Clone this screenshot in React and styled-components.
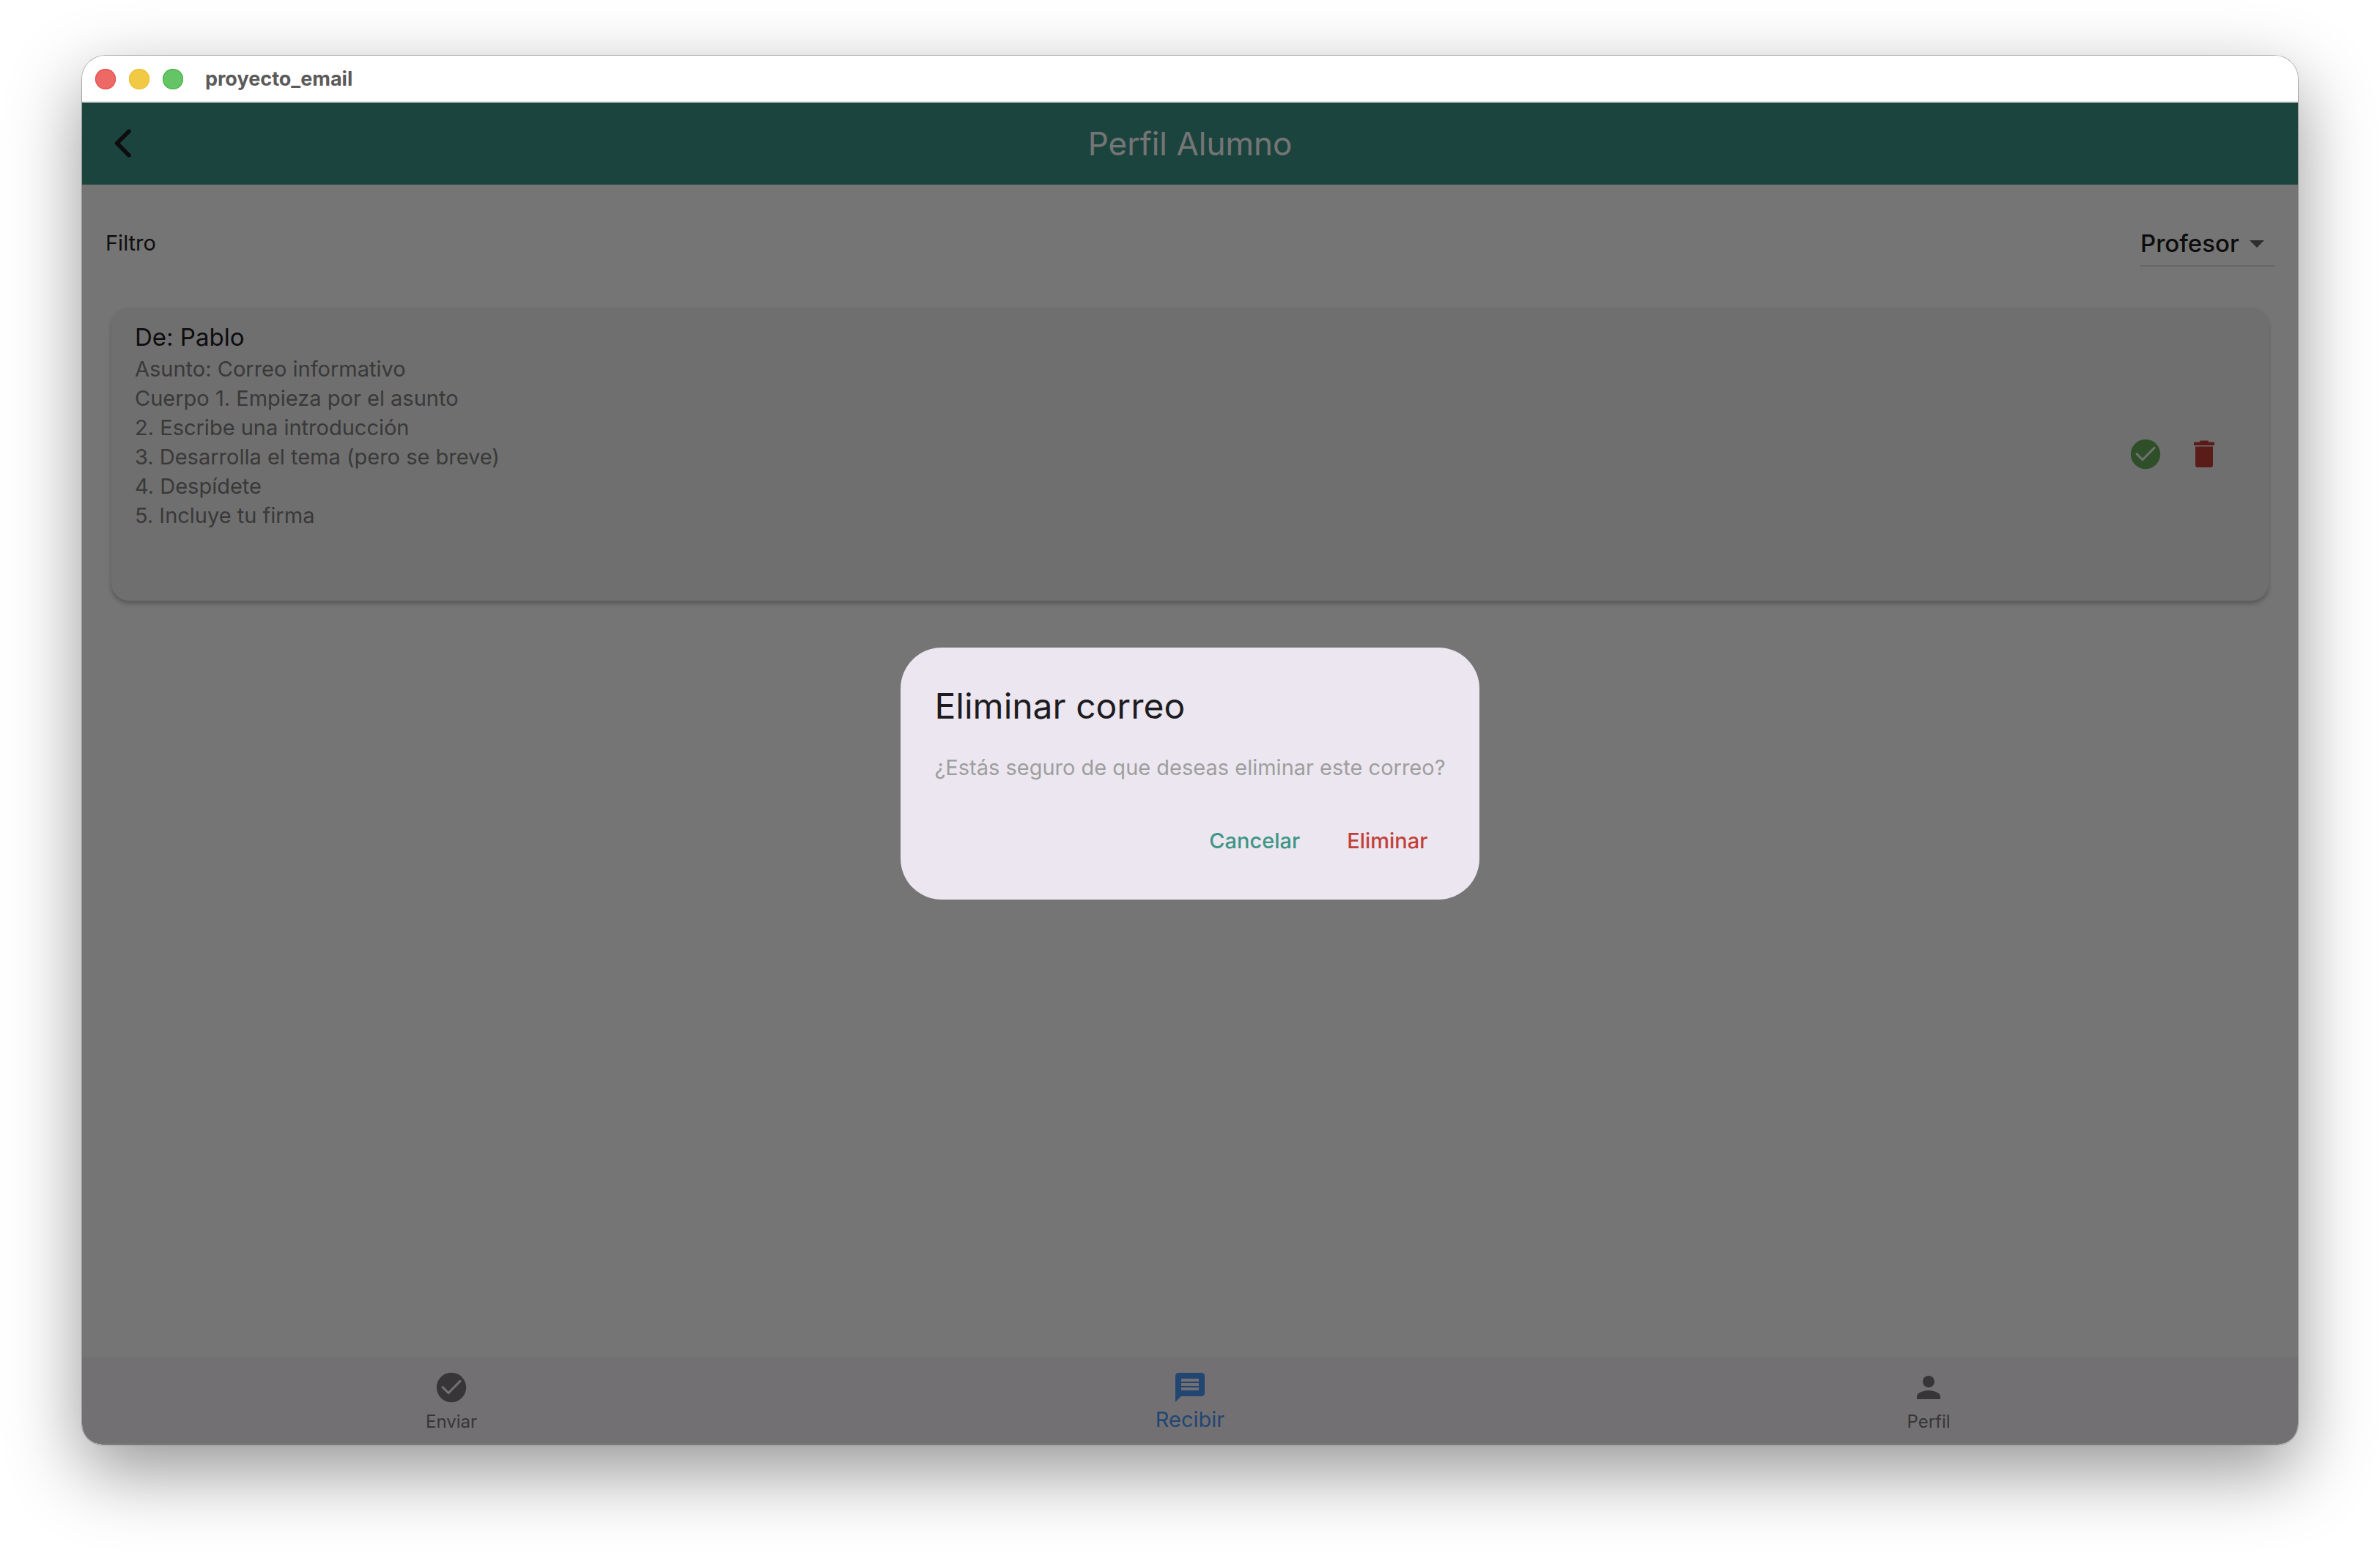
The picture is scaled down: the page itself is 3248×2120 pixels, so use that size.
import React from "react";
import styled, { createGlobalStyle } from "styled-components";

const GlobalStyle = createGlobalStyle`
  *, *::before, *::after { box-sizing: border-box; }
  body {
    margin: 0;
    background: #ffffff;
    font-family: Inter, "Liberation Sans", sans-serif;
    color: #1d1b20;
  }
  h1, h2, p { margin: 0; font-weight: 400; }
  button, select { font-family: inherit; border: 0; background: none; padding: 0; margin: 0; cursor: pointer; }
`;

const Desktop = styled.div`
  display: flex;
  min-height: 100vh;
  padding: 76px 112px 148px;
`;

const AppWindow = styled.div`
  display: flex;
  flex: 1;
  flex-direction: column;
  overflow: hidden;
  border-radius: 32px 32px 28px 28px;
  box-shadow: 0 0 0 1px rgba(0, 0, 0, 0.26), 0 36px 100px rgba(0, 0, 0, 0.42);
`;

const TitleBar = styled.div`
  display: flex;
  align-items: center;
  gap: 18px;
  height: 64px;
  padding: 2px 18px 0;
  background: #ffffff;
  border-bottom: 2px solid #e5e5e5;
`;

const TrafficLight = styled.button`
  width: 28px;
  height: 28px;
  border-radius: 50%;
  background: ${(p) => p.$fill};
  box-shadow: inset 0 0 0 1px ${(p) => p.$edge};
`;

const WindowTitle = styled.span`
  padding-left: 12px;
  font-size: 27px;
  line-height: 32px;
  font-weight: 700;
  color: #5a5a5a;
`;

const Screen = styled.div`
  position: relative;
  display: flex;
  flex: 1;
  flex-direction: column;
  background: #ffffff;
`;

const AppBar = styled.header`
  display: grid;
  grid-template-columns: 112px 1fr 112px;
  align-items: center;
  height: 112px;
  background: #3b9487;
`;

const IconButton = styled.button`
  display: flex;
  align-items: center;
  justify-content: center;
  justify-self: center;
  width: 80px;
  height: 80px;
  color: ${(p) => p.$color};
`;

const AppBarTitle = styled.h1`
  text-align: center;
  font-size: 44px;
  line-height: 56px;
  color: #ffffff;
`;

const Content = styled.main`
  display: flex;
  flex: 1;
  flex-direction: column;
  gap: 56px;
  padding: 56px 32px;
`;

const FilterRow = styled.div`
  display: flex;
  justify-content: space-between;
  align-items: flex-start;
`;

const FilterLabel = styled.label`
  font-size: 29px;
  line-height: 48px;
  color: #212121;
`;

const SelectField = styled.div`
  position: relative;
  display: flex;
  padding-bottom: 6px;
  border-bottom: 2px solid #dedede;
`;

const Select = styled.select`
  appearance: none;
  height: 48px;
  padding-right: 48px;
  font-size: 33px;
  line-height: 48px;
  font-weight: 500;
  color: #1d1b20;
  outline: none;
`;

const SelectArrow = styled.svg`
  position: absolute;
  top: 0;
  right: 0;
  pointer-events: none;
  color: #646464;
`;

const MailList = styled.ul`
  display: flex;
  flex-direction: column;
  gap: 16px;
  list-style: none;
  margin: 0;
  padding: 0 8px;
`;

const MailCard = styled.li`
  display: flex;
  align-items: center;
  justify-content: space-between;
  padding: 16px 48px 16px 32px;
  border-radius: 24px;
  background: #f2f2f2;
  box-shadow: 0 4px 6px rgba(0, 0, 0, 0.26);
`;

const MailSender = styled.h2`
  font-size: 33px;
  line-height: 48px;
  color: #1d1b20;
`;

const MailText = styled.p`
  font-size: 29px;
  line-height: 40px;
  color: #7c7c7c;
`;

const MailBody = styled.div`
  padding-bottom: 80px;
`;

const MailActions = styled.div`
  display: flex;
`;

const BottomNav = styled.nav`
  display: grid;
  grid-template-columns: repeat(3, 1fr);
  height: 120px;
  background: #faf5fa;
  border-bottom: 2px solid #ffffff;
`;

const NavItem = styled.button`
  display: flex;
  flex-direction: column;
  align-items: center;
  gap: ${(p) => (p.$active ? "4px" : "7px")};
  padding-top: 18px;
  font-size: ${(p) => (p.$active ? "29px" : "24px")};
  line-height: 32px;
  color: ${(p) => (p.$active ? "#4a98f8" : "#78737a")};
`;

const Scrim = styled.div`
  position: absolute;
  inset: 0;
  display: flex;
  align-items: center;
  justify-content: center;
  background: rgba(0, 0, 0, 0.54);
`;

const Dialog = styled.section`
  display: flex;
  flex-direction: column;
  padding: 48px 46px;
  border-radius: 56px;
  background: #ece6f0;
`;

const DialogTitle = styled.h2`
  font-size: 48px;
  line-height: 64px;
  color: #1d1b20;
`;

const DialogText = styled.p`
  margin-top: 32px;
  font-size: 29px;
  line-height: 40px;
  color: #9e9e9e;
`;

const DialogActions = styled.div`
  display: flex;
  justify-content: flex-end;
  gap: 16px;
  margin-top: 48px;
`;

const TextButton = styled.button`
  padding: 0 24px;
  font-size: 29px;
  line-height: 64px;
  font-weight: 500;
  color: ${(p) => p.$color};
`;

function Icon({ children }) {
  return (
    <svg width="48" height="48" viewBox="0 0 24 24" fill="currentColor" aria-hidden="true">
      {children}
    </svg>
  );
}

function CheckCircleIcon({ mark }) {
  return (
    <Icon>
      <circle cx="12" cy="12" r="10.1" />
      <path d="M6 11.8l4 4 8-8.1" fill="none" stroke={mark} strokeWidth="1.5" strokeLinecap="round" />
    </Icon>
  );
}

const mails = [
  {
    id: 1,
    from: "Pablo",
    subject: "Correo informativo",
    body: [
      "1. Empieza por el asunto",
      "2. Escribe una introducción",
      "3. Desarrolla el tema (pero se breve)",
      "4. Despídete",
      "5. Incluye tu firma",
    ],
  },
];

export default function App() {
  return (
    <>
      <GlobalStyle />
      <Desktop>
        <AppWindow>
          <TitleBar>
            <TrafficLight $fill="#ed6966" $edge="#e24b48" aria-label="Cerrar" />
            <TrafficLight $fill="#f2c944" $edge="#eebc22" aria-label="Minimizar" />
            <TrafficLight $fill="#65c466" $edge="#42b346" aria-label="Ampliar" />
            <WindowTitle>proyecto_email</WindowTitle>
          </TitleBar>
          <Screen>
            <AppBar>
              <IconButton $color="#1d1b20" aria-label="Volver">
                <Icon>
                  <path
                    d="M16 3.6L7.8 11.8l8.2 8.2"
                    fill="none"
                    stroke="currentColor"
                    strokeWidth="2.8"
                    strokeLinecap="round"
                    strokeLinejoin="round"
                  />
                </Icon>
              </IconButton>
              <AppBarTitle>Perfil Alumno</AppBarTitle>
            </AppBar>
            <Content>
              <FilterRow>
                <FilterLabel htmlFor="filtro">Filtro</FilterLabel>
                <SelectField>
                  <Select id="filtro" defaultValue="profesor">
                    <option value="profesor">Profesor</option>
                  </Select>
                  <SelectArrow width="48" height="48" viewBox="0 0 24 24" fill="currentColor" aria-hidden="true">
                    <path d="M7 10l5 5 5-5z" />
                  </SelectArrow>
                </SelectField>
              </FilterRow>
              <MailList>
                {mails.map((mail) => (
                  <MailCard key={mail.id}>
                    <MailBody>
                      <MailSender>{`De: ${mail.from}`}</MailSender>
                      <MailText>{`Asunto: ${mail.subject}`}</MailText>
                      {mail.body.map((line, i) => (
                        <MailText key={line}>{i === 0 ? `Cuerpo ${line}` : line}</MailText>
                      ))}
                    </MailBody>
                    <MailActions>
                      <IconButton $color="#66ac5b" aria-label="Marcar como leído">
                        <CheckCircleIcon mark="#f2f2f2" />
                      </IconButton>
                      <IconButton $color="#c43d36" aria-label="Eliminar correo">
                        <Icon>
                          <path d="M6 19.6c0 .8.6 1.4 1.4 1.4h9.2c.8 0 1.4-.6 1.4-1.4V6.8H6zM19 3.8h-3.6l-.9-1h-5l-.9 1H5V6h14z" />
                        </Icon>
                      </IconButton>
                    </MailActions>
                  </MailCard>
                ))}
              </MailList>
            </Content>
            <BottomNav>
              <NavItem>
                <CheckCircleIcon mark="#faf5fa" />
                Enviar
              </NavItem>
              <NavItem $active aria-current="page">
                <Icon>
                  <path d="M20 2H4c-1.1 0-1.99.9-1.99 2L2 22l4-4h14c1.1 0 2-.9 2-2V4c0-1.1-.9-2-2-2zm-2 12H6v-2h12v2zm0-3H6V9h12v2zm0-3H6V6h12v2z" />
                </Icon>
                Recibir
              </NavItem>
              <NavItem>
                <Icon>
                  <path d="M12 12c2.21 0 4-1.79 4-4s-1.79-4-4-4-4 1.79-4 4 1.79 4 4 4zm0 2c-2.67 0-8 1.34-8 4v2h16v-2c0-2.66-5.33-4-8-4z" />
                </Icon>
                Perfil
              </NavItem>
            </BottomNav>
            <Scrim>
              <Dialog role="alertdialog" aria-labelledby="dialog-title" aria-describedby="dialog-text">
                <DialogTitle id="dialog-title">Eliminar correo</DialogTitle>
                <DialogText id="dialog-text">¿Estás seguro de que deseas eliminar este correo?</DialogText>
                <DialogActions>
                  <TextButton $color="#3f9686">Cancelar</TextButton>
                  <TextButton $color="#c2403a">Eliminar</TextButton>
                </DialogActions>
              </Dialog>
            </Scrim>
          </Screen>
        </AppWindow>
      </Desktop>
    </>
  );
}
